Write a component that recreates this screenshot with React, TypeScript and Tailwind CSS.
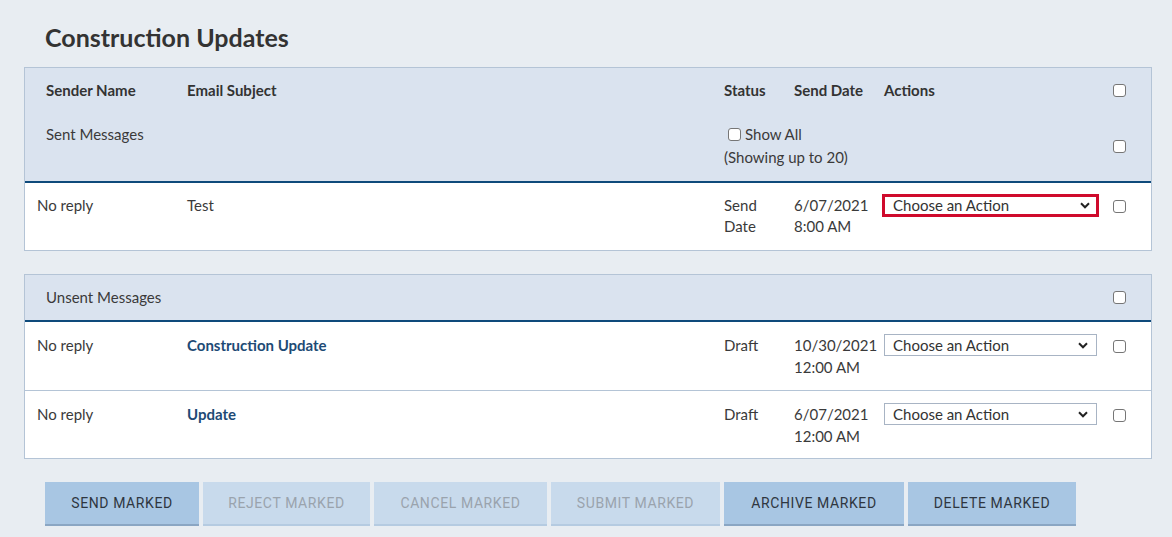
import React from "react";

const COLS = "grid grid-cols-[150px_537px_70px_90px_229px_50px]";

function Check({ className = "" }: { className?: string }) {
  return (
    <input
      type="checkbox"
      className={"m-0 h-[13px] w-[13px] appearance-none rounded-[3px] border border-[#767676] bg-white " + className}
    />
  );
}

function ActionSelect({ highlighted = false }: { highlighted?: boolean }) {
  return (
    <div
      className={
        highlighted
          ? "-mx-[2px] -my-[1px] flex h-[23px] w-[217px] items-center justify-between border-[3px] border-[#cf0a2c] bg-white pl-[8px] pr-[6px]"
          : "flex h-[22px] w-[213px] items-center justify-between border border-[#a8b4c4] bg-white pl-[8px] pr-[8px]"
      }
    >
      <span className="text-[15px] leading-none text-[#333]">Choose an Action</span>
      <svg width="10" height="7" viewBox="0 0 10 7">
        <path d="M1 1.3 L5 5.3 L9 1.3" fill="none" stroke="#222" strokeWidth="2" />
      </svg>
    </div>
  );
}

function Row({
  subject,
  link,
  status,
  date,
  time,
  highlighted,
  last,
  lh,
  pb,
}: {
  subject: string;
  link?: boolean;
  status: React.ReactNode;
  date: string;
  time: string;
  highlighted?: boolean;
  last?: boolean;
  lh: string;
  pb: string;
}) {
  return (
    <div className={COLS + " bg-white text-[15px] text-[#3a3a3a] " + lh + " " + (last ? "" : "border-b border-[#b4c4d6]")}>
      <div className={"px-[12px] pt-[12px] " + pb}>No reply</div>
      <div className={"px-[12px] pt-[12px] " + (link ? "font-bold text-[#1d4a75]" : "")}>{subject}</div>
      <div className={"px-[12px] pt-[12px] " + pb}>{status}</div>
      <div className={"whitespace-nowrap px-[12px] pt-[12px] " + pb}>
        <div>{date}</div>
        <div>{time}</div>
      </div>
      <div className="px-[12px] pt-[12px]">
        <ActionSelect highlighted={highlighted} />
      </div>
      <div className="pl-[12px] pt-[14px]">
        <Check />
      </div>
    </div>
  );
}

const BTN_ON = "h-[44px] border-b-[2px] border-[#8aa6c3] bg-[#a8c6e3] uppercase text-[#2f3640]";
const BTN_OFF = "h-[44px] border-b-[2px] border-[#b5cbe1] bg-[#c8daec] uppercase text-[#9aa3ad]";

export default function App() {
  return (
    <div
      className="min-h-[537px] bg-[#e8edf2] pb-[12px] text-[#333]"
      style={{ fontFamily: "Lato, 'Noto Sans', sans-serif" }}
    >
      <h1 className="pl-[45px] pt-[21px] text-[25px] font-bold leading-[32px] text-[#333]">Construction Updates</h1>

      <div className="ml-[24px] mr-[20px] mt-[14px] border border-[#b4c4d6]">
        <div className="bg-[#dae3ef] text-[15px]">
          <div className={COLS + " font-bold leading-[20px]"}>
            <div className="pl-[21px] pt-[12px] pb-[12px]">Sender Name</div>
            <div className="px-[12px] pt-[12px]">Email Subject</div>
            <div className="px-[12px] pt-[12px]">Status</div>
            <div className="whitespace-nowrap px-[12px] pt-[12px]">Send Date</div>
            <div className="px-[12px] pt-[12px]">Actions</div>
            <div className="flex items-center pl-[12px]">
              <Check />
            </div>
          </div>
          <div className={COLS + " leading-[20px] text-[#3a3a3a]"}>
            <div className="pl-[21px] pt-[12px]">Sent Messages</div>
            <div />
            <div className="col-span-3 px-[12px] pt-[12px] pb-[14px]">
              <div className="flex items-center gap-[4px] pl-[4px]">
                <Check />
                <span>Show All</span>
              </div>
              <div className="mt-[3px]">(Showing up to 20)</div>
            </div>
            <div className="flex items-center pl-[12px]">
              <Check />
            </div>
          </div>
        </div>
        <div className="h-[2px] bg-[#0e4a7b]" />
        <Row
          subject="Test"
          status={
            <>
              <div>Send</div>
              <div>Date</div>
            </>
          }
          date="6/07/2021"
          time="8:00 AM"
          highlighted
          last
          lh="leading-[21px]"
          pb="pb-[13px]"
        />
      </div>

      <div className="ml-[24px] mr-[20px] mt-[23px] border border-[#b4c4d6]">
        <div className={COLS + " bg-[#dae3ef] text-[15px] leading-[20px] text-[#3a3a3a]"}>
          <div className="col-span-5 pl-[21px] pt-[12px] pb-[13px]">Unsent Messages</div>
          <div className="flex items-center pl-[12px]">
            <Check />
          </div>
        </div>
        <div className="h-[2px] bg-[#0e4a7b]" />
        <Row
          subject="Construction Update"
          link
          status="Draft"
          date="10/30/2021"
          time="12:00 AM"
          lh="leading-[22px]"
          pb="pb-[12px]"
        />
        <Row
          subject="Update"
          link
          status="Draft"
          date="6/07/2021"
          time="12:00 AM"
          last
          lh="leading-[22px]"
          pb="pb-[11px]"
        />
      </div>

      <div
        className="ml-[45px] mt-[23px] flex gap-[4px] text-[14px] tracking-[0.6px]"
        style={{ fontFamily: "Roboto, 'Noto Sans', sans-serif" }}
      >
        <button className={BTN_ON + " w-[154px]"}>Send Marked</button>
        <button className={BTN_OFF + " w-[167px]"}>Reject Marked</button>
        <button className={BTN_OFF + " w-[173px]"}>Cancel Marked</button>
        <button className={BTN_OFF + " w-[169px]"}>Submit Marked</button>
        <button className={BTN_ON + " w-[180px]"}>Archive Marked</button>
        <button className={BTN_ON + " w-[168px]"}>Delete Marked</button>
      </div>
    </div>
  );
}
